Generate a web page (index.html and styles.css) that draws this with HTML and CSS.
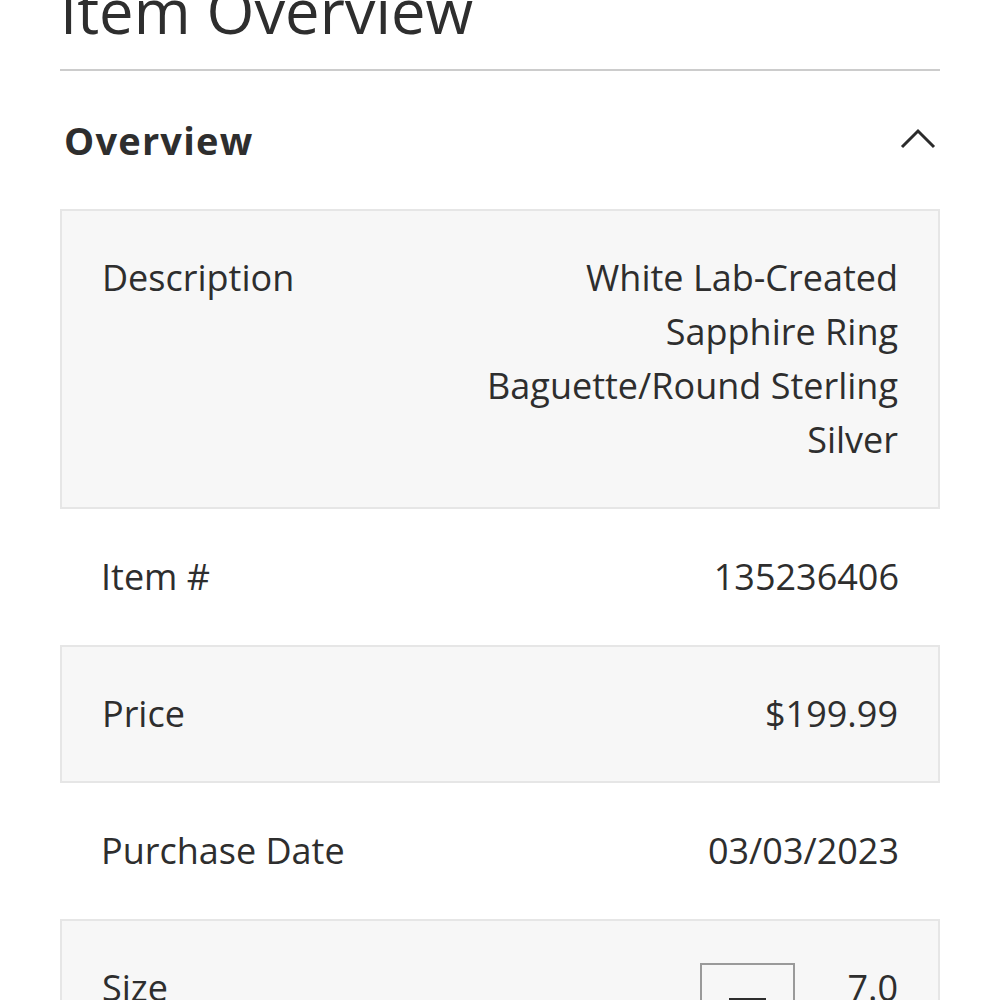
FILE: index.html
```html
<!DOCTYPE html>
<html lang="en">
<head>
    <meta charset="UTF-8">
    <meta name="viewport" content="width=device-width, initial-scale=1.0">
    <title>Item Overview</title>
    <link rel="stylesheet" href="styles.css">
</head>
<body>
    <div class="page">
        <h1 class="page-title">Item Overview</h1>

        <section class="panel">
            <div class="panel-header">
                <h2>Overview</h2>
                <svg class="chevron" width="36" height="22" viewBox="0 0 36 22" aria-hidden="true">
                    <polyline points="2,19 18,3 34,19" fill="none" stroke="#2b2b2b" stroke-width="3"/>
                </svg>
            </div>

            <div class="details">
                <div class="row shaded">
                    <div class="label">Description</div>
                    <div class="value">White Lab-Created Sapphire Ring Baguette/Round Sterling Silver</div>
                </div>
                <div class="row">
                    <div class="label">Item #</div>
                    <div class="value">135236406</div>
                </div>
                <div class="row shaded">
                    <div class="label">Price</div>
                    <div class="value">$199.99</div>
                </div>
                <div class="row">
                    <div class="label">Purchase Date</div>
                    <div class="value">03/03/2023</div>
                </div>
                <div class="row shaded">
                    <div class="label">Size</div>
                    <div class="value stepper">
                        <button class="step-btn" aria-label="Decrease size"><span class="minus"></span></button>
                        <span class="step-value">7.0</span>
                    </div>
                </div>
            </div>
        </section>
    </div>
</body>
</html>
```

FILE: styles.css
```css
:root {
    --text-color: #2e2e2e;
    --row-background: #f7f7f7;
    --row-border: #e6e6e6;
    --divider: #cccccc;
}
body {
    font-family: 'Open Sans', 'Noto Sans', sans-serif;
    color: var(--text-color);
    background: #ffffff;
    margin: 0;
}
.page {
    padding: 0 60px;
}
.page-title {
    font-size: 61.5px;
    font-weight: 400;
    line-height: 80px;
    margin: -30px 0 0 0;
    padding-bottom: 19px;
    border-bottom: 2px solid var(--divider);
}
.panel-header {
    display: flex;
    align-items: center;
    justify-content: space-between;
    height: 138px;
    padding: 0 4px;
}
.panel-header h2 {
    margin: 0;
    font-size: 38px;
    font-weight: 700;
    letter-spacing: 1.2px;
}
.chevron {
    margin-right: 0;
    margin-top: -2px;
}
.row {
    display: grid;
    grid-template-columns: 342px 1fr;
    padding: 40px 40px;
    border: 1px solid transparent;
    font-size: 36px;
    line-height: 54px;
}
.row.shaded {
    background: var(--row-background);
    border: 2px solid var(--row-border);
}
.value {
    text-align: right;
}
.stepper {
    display: flex;
    justify-content: flex-end;
    align-items: flex-start;
    gap: 52px;
}
.step-btn {
    width: 95px;
    height: 72px;
    margin-top: 2px;
    border: 2px solid #9a9a9a;
    background: #f7f7f7;
    display: flex;
    align-items: center;
    justify-content: center;
    padding: 0;
}
.minus {
    display: block;
    width: 37px;
    height: 3px;
    background: var(--text-color);
}
```
